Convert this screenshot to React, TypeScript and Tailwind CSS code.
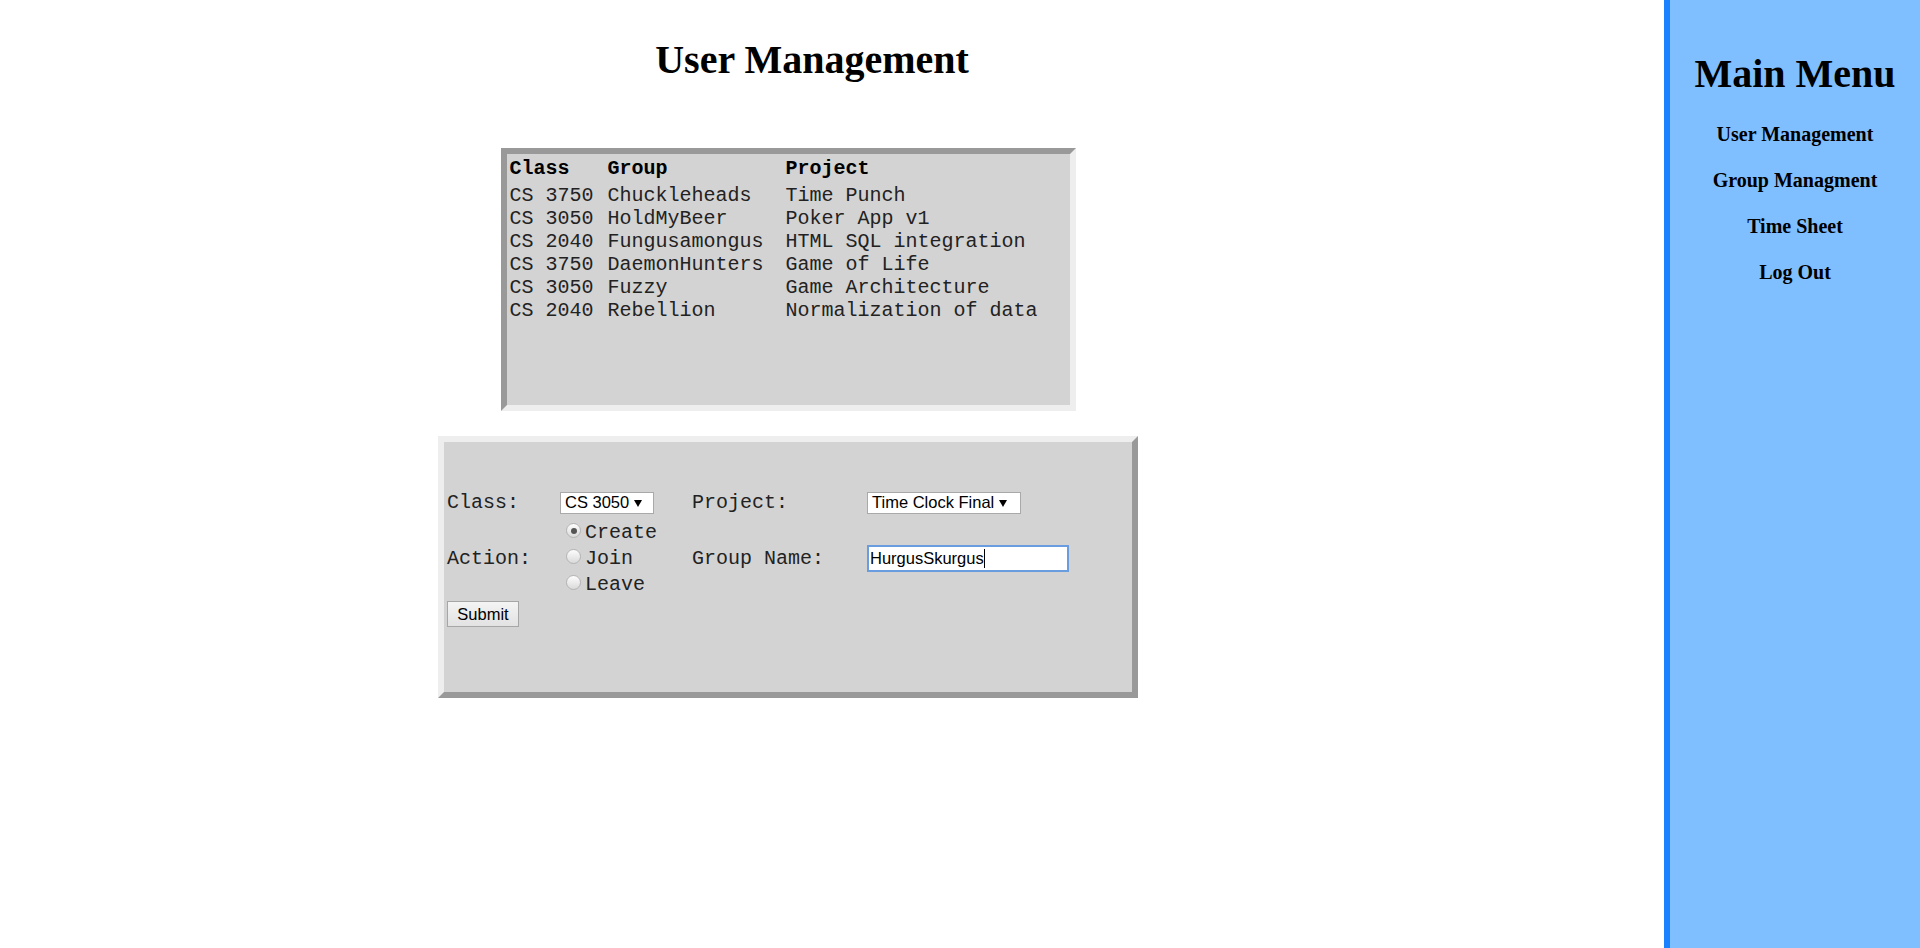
import React from 'react';

const groups = [
  { cls: 'CS 3750', group: 'Chuckleheads', project: 'Time Punch' },
  { cls: 'CS 3050', group: 'HoldMyBeer', project: 'Poker App v1' },
  { cls: 'CS 2040', group: 'Fungusamongus', project: 'HTML SQL integration' },
  { cls: 'CS 3750', group: 'DaemonHunters', project: 'Game of Life' },
  { cls: 'CS 3050', group: 'Fuzzy', project: 'Game Architecture' },
  { cls: 'CS 2040', group: 'Rebellion', project: 'Normalization of data' },
];

const menuItems = ['User Management', 'Group Managment', 'Time Sheet', 'Log Out'];

function FakeSelect({ value, width }: { value: string; width: string }) {
  return (
    <div
      className={`flex h-[22px] items-center border border-[#a9a9a9] bg-white pl-[4px] font-['Liberation_Sans',Arial,sans-serif] text-[16.5px] leading-none text-black ${width}`}
    >
      <span>{value}</span>
      <svg width="8" height="8" viewBox="0 0 8 8" className="ml-[5px]">
        <path d="M0 1h8L4 8z" fill="#000" />
      </svg>
    </div>
  );
}

function Radio({ label, checked }: { label: string; checked?: boolean }) {
  return (
    <div className="flex h-[26px] items-center">
      <div className="mb-[3px] ml-[6px] mr-[4px] flex h-[15px] w-[15px] items-center justify-center rounded-full border border-[#b4b4b4] bg-gradient-to-b from-[#fdfdfd] to-[#dadada]">
        {checked && <div className="h-[6px] w-[6px] rounded-full bg-[#555]" />}
      </div>
      <span>{label}</span>
    </div>
  );
}

export default function App() {
  return (
    <div className="flex h-[948px] w-full bg-white">
      <main className="flex w-[1664px] flex-col">
        <h1 className="mt-[37px] pr-[40px] text-center font-['Liberation_Serif','Times_New_Roman',serif] text-[40px] font-bold leading-[46px] text-black">
          User Management
        </h1>

        <div className="mt-[65px] flex flex-col items-center pr-[88px] font-['Liberation_Mono','Courier_New',monospace] text-[20px] leading-[23px] text-[#222]">
          <div className="h-[263px] w-[575px] border-[6px] border-t-[#999] border-l-[#999] border-b-[#eee] border-r-[#eee] bg-[#d3d3d3] pl-[3px] pt-[3px]">
            <div className="grid grid-cols-[98px_178px_auto] font-bold text-black">
              <span>Class</span>
              <span>Group</span>
              <span>Project</span>
            </div>
            <div className="mt-[4px]">
              {groups.map((g, i) => (
                <div key={i} className="grid grid-cols-[98px_178px_auto] whitespace-pre">
                  <span>{g.cls}</span>
                  <span>{g.group}</span>
                  <span>{g.project}</span>
                </div>
              ))}
            </div>
          </div>

          <div className="mt-[25px] h-[262px] w-[700px] border-[6px] border-t-[#eee] border-l-[#eee] border-b-[#999] border-r-[#999] bg-[#d3d3d3] pl-[3px] pt-[49px]">
            <div className="grid grid-cols-[113px_132px_175px_auto] items-center">
              <span>Class:</span>
              <FakeSelect value="CS 3050" width="w-[94px]" />
              <span>Project:</span>
              <FakeSelect value="Time Clock Final" width="w-[154px]" />
            </div>
            <div className="mt-[5px] grid grid-cols-[113px_132px_175px_auto] items-center">
              <span>Action:</span>
              <div className="flex flex-col">
                <Radio label="Create" checked />
                <Radio label="Join" />
                <Radio label="Leave" />
              </div>
              <span>Group Name:</span>
              <div className="flex h-[27px] w-[202px] items-center border-2 border-[#6a9de0] bg-white pl-[1px] font-['Liberation_Sans',Arial,sans-serif] text-[16.5px] text-black">
                <span>HurgusSkurgus</span>
                <span className="h-[19px] w-px bg-black" />
              </div>
            </div>
            <button className="mt-[4px] h-[26px] w-[72px] border border-[#a6a6a6] bg-gradient-to-b from-[#f4f4f4] to-[#e2e2e2] font-['Liberation_Sans',Arial,sans-serif] text-[16.5px] text-black">
              Submit
            </button>
          </div>
        </div>
      </main>

      <aside className="flex w-[256px] flex-col items-center border-l-[6px] border-[#1a82ff] bg-[#80bfff] pt-[51px] font-['Liberation_Serif','Times_New_Roman',serif] font-bold text-black">
        <h2 className="text-[40px] leading-[46px]">Main Menu</h2>
        <nav className="mt-[26px] flex flex-col items-center gap-[23px] text-[20px] leading-[23px]">
          {menuItems.map((item) => (
            <a key={item} href="#" className="text-black">
              {item}
            </a>
          ))}
        </nav>
      </aside>
    </div>
  );
}
